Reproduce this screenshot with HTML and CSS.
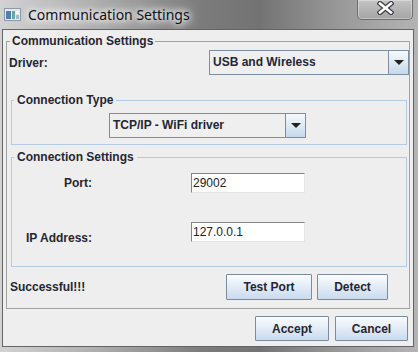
FILE: index.html
```html
<!DOCTYPE html>
<html lang="en">
<head>
    <meta charset="UTF-8">
    <title>Communication Settings</title>
    <link rel="stylesheet" href="styles.css">
</head>
<body>
    <div class="window">
        <!-- Title bar -->
        <div class="titlebar">
            <svg class="app-icon" width="17" height="13" viewBox="0 0 17 13">
                <rect x="0.5" y="0.5" width="16" height="12" fill="#e4e9ee" stroke="#8d9aa6"/>
                <rect x="2" y="3" width="5" height="8" fill="#4f7fb5"/>
                <rect x="8" y="3" width="3" height="8" fill="#6aa7a0"/>
                <rect x="12" y="3" width="3" height="3" fill="#ffffff"/>
                <rect x="12" y="7" width="3" height="4" fill="#9fb8c8"/>
            </svg>
            <span class="title">Communication Settings</span>
            <div class="close-btn">
                <svg width="17" height="14" viewBox="0 0 17 14">
                    <path d="M3 2.5 L14 11.5 M14 2.5 L3 11.5" stroke="#3c3c4a" stroke-width="5" stroke-linecap="square"/>
                    <path d="M3 2.5 L14 11.5 M14 2.5 L3 11.5" stroke="#ffffff" stroke-width="2.6" stroke-linecap="square"/>
                </svg>
            </div>
        </div>

        <div class="client">
            <fieldset class="group outer">
                <legend>Communication Settings</legend>

                <div class="driver-row">
                    <span class="label">Driver:</span>
                    <div class="combo driver-combo">
                        <span class="combo-value">USB and Wireless</span>
                        <span class="combo-arrow"></span>
                    </div>
                </div>

                <fieldset class="group inner type-group">
                    <legend>Connection Type</legend>
                    <div class="combo type-combo">
                        <span class="combo-value">TCP/IP - WiFi driver</span>
                        <span class="combo-arrow"></span>
                    </div>
                </fieldset>

                <fieldset class="group inner settings-group">
                    <legend>Connection Settings</legend>
                    <span class="label field-label">Port:</span>
                    <input class="text-input" type="text" value="29002">
                    <span class="label field-label ip-label">IP Address:</span>
                    <input class="text-input" type="text" value="127.0.0.1">
                </fieldset>

                <div class="status-row">
                    <span class="label status">Successful!!!</span>
                    <button class="btn test-btn">Test Port</button>
                    <button class="btn detect-btn">Detect</button>
                </div>
            </fieldset>

            <div class="footer">
                <button class="btn accept-btn">Accept</button>
                <button class="btn cancel-btn">Cancel</button>
            </div>
        </div>
    </div>
</body>
</html>
```

FILE: styles.css
```css
body {
    margin: 0;
    width: 418px;
    height: 352px;
    overflow: hidden;
    font-family: "Liberation Sans", Arial, sans-serif;
    font-size: 12px;
    color: #262633;
    background: #6a6a6a;
}
.window {
    height: 352px;
    display: flex;
    flex-direction: column;
    background: linear-gradient(to right, #d2d2d2, #b0b0b0 22%, #7c7c7c 48%, #737373 62%, #9a9a9a 82%, #b4b4b4);
}
.titlebar {
    height: 29px;
    display: flex;
    align-items: flex-start;
    flex-shrink: 0;
}
.app-icon {
    margin: 8px 0 0 4px;
}
.title {
    font-family: "Noto Sans", "Open Sans", sans-serif;
    font-size: 14px;
    line-height: 20px;
    margin: 5px 0 0 7px;
    color: #101018;
    text-shadow: 0 0 6px #fff, 0 0 10px #fff, 0 0 12px #fff;
}
.close-btn {
    margin-left: auto;
    margin-right: 5px;
    width: 56px;
    height: 20px;
    box-sizing: border-box;
    border: 1px solid #6d6d6d;
    border-top: none;
    border-radius: 0 0 5px 5px;
    background: linear-gradient(#c4c4c4, #a4a4a4);
    box-shadow: inset 0 0 0 1px rgba(255, 255, 255, 0.35);
    display: flex;
    justify-content: center;
    padding-top: 1px;
}
.client {
    flex: 1;
    margin: 0 4px 5px 2px;
    border: 1px solid #646464;
    background: #eeeeee;
    display: flex;
    flex-direction: column;
}
.group {
    margin: 0;
    padding: 0;
    min-width: 0;
}
.group legend {
    font-weight: bold;
    padding: 0 2px;
}
.outer {
    margin: 4px 3px 0 3px;
    padding-bottom: 8px;
    border: 1px solid #a2a2a2;
}
.outer > legend {
    margin-left: 3px;
}
.inner {
    border: 1px solid #b3cbe2;
    margin: 0 2px 0 4px;
}
.inner > legend {
    margin-left: 2px;
    padding: 0 3px;
}
.label {
    font-weight: bold;
}
.driver-row {
    display: flex;
    justify-content: space-between;
    align-items: center;
    padding: 2px 0 0 2px;
}
.combo {
    display: flex;
    height: 25px;
    box-sizing: border-box;
    border: 1px solid #7d8ea0;
    background: #efefef;
    font-weight: bold;
}
.combo-value {
    flex: 1;
    padding-left: 3px;
    line-height: 23px;
}
.combo-arrow {
    width: 19px;
    border-left: 1px solid #7d8ea0;
    background: linear-gradient(#f6f9fc, #c5d9ec);
    display: flex;
    align-items: center;
    justify-content: center;
}
.combo-arrow::after {
    content: "";
    border-left: 5px solid transparent;
    border-right: 5px solid transparent;
    border-top: 5px solid #222;
}
.driver-combo {
    width: 200px;
}
.type-group {
    margin-top: 18px;
    padding: 6px 0 6px 0;
}
.type-combo {
    width: 197px;
    margin-left: 97px;
}
.settings-group {
    margin-top: 5px;
    padding: 9px 0 18px 0;
    display: grid;
    grid-template-columns: 80px 114px;
    column-gap: 99px;
    row-gap: 29px;
    align-items: start;
}
.field-label {
    text-align: right;
    line-height: 20px;
}
.ip-label {
    padding-top: 6px;
}
.text-input {
    width: 114px;
    height: 20px;
    box-sizing: border-box;
    margin: 0;
    padding: 0 0 0 1px;
    border: 1px solid;
    border-color: #858585 #e4e4e4 #e4e4e4 #858585;
    background: #fff;
    font-family: "Liberation Sans", Arial, sans-serif;
    font-size: 12px;
    color: #222;
    outline: none;
}
.status-row {
    display: flex;
    align-items: center;
    gap: 5px;
    margin: 7px 21px 0 0;
    padding-left: 3px;
}
.status {
    margin-right: auto;
}
.btn {
    box-sizing: border-box;
    border: 1px solid #7c8b9b;
    border-radius: 1px;
    background: linear-gradient(#fbfcfe, #e4edf7 45%, #c9dbee);
    font-family: "Liberation Sans", Arial, sans-serif;
    font-size: 12px;
    font-weight: bold;
    color: #262633;
    padding: 0;
    cursor: pointer;
}
.test-btn {
    width: 86px;
    height: 26px;
}
.detect-btn {
    width: 71px;
    height: 26px;
}
.footer {
    display: flex;
    justify-content: flex-end;
    gap: 6px;
    margin: 7px 5px 0 0;
}
.accept-btn {
    width: 74px;
    height: 25px;
}
.cancel-btn {
    width: 73px;
    height: 25px;
}
```
